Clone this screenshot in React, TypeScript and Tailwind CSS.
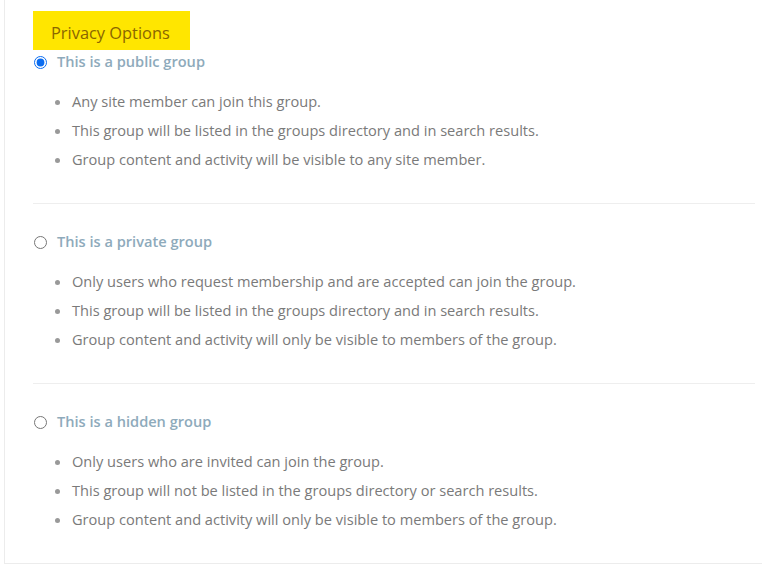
import * as React from "react";

type Option = {
    id: string;
    label: string;
    points: string[];
};

const options: Option[] = [
    {
        id: "public",
        label: "This is a public group",
        points: [
            "Any site member can join this group.",
            "This group will be listed in the groups directory and in search results.",
            "Group content and activity will be visible to any site member.",
        ],
    },
    {
        id: "private",
        label: "This is a private group",
        points: [
            "Only users who request membership and are accepted can join the group.",
            "This group will be listed in the groups directory and in search results.",
            "Group content and activity will only be visible to members of the group.",
        ],
    },
    {
        id: "hidden",
        label: "This is a hidden group",
        points: [
            "Only users who are invited can join the group.",
            "This group will not be listed in the groups directory or search results.",
            "Group content and activity will only be visible to members of the group.",
        ],
    },
];

export default function App() {
    const [status, setStatus] = React.useState("public");

    return (
        <div className="min-h-[583px] bg-white" style={{fontFamily: '"Open Sans", "Noto Sans", sans-serif'}}>
            <div className="ml-[4px] h-[564px] border-l border-b border-[#ececec] pl-[28px] pr-[7px] pt-[11px]">
                <div className="flex h-[39px] w-[157px] items-center bg-[#ffe600] pl-[18px] pt-[6px] text-[16.4px] text-[#8a6500]">
                    Privacy Options
                </div>

                {options.map((opt, i) => (
                    <div
                        key={opt.id}
                        className={i < options.length - 1 ? "border-b border-[#eeeeee] pb-[29px]" : "pb-[29px]"}
                    >
                        <label
                            className={
                                "flex h-[24px] cursor-pointer items-center gap-[10px] " +
                                (i === 0 ? "mt-0" : "mt-[26px]")
                            }
                        >
                            <input
                                type="radio"
                                name="group-status"
                                checked={status === opt.id}
                                onChange={() => setStatus(opt.id)}
                                className="m-0 ml-[1px] h-[13px] w-[13px] accent-[#0a6cf0]"
                            />
                            <span className="text-[14.6px] font-semibold text-[#8eaabb]">{opt.label}</span>
                        </label>
                        <ul className="mt-[13px] list-disc pl-[39px] text-[14.6px] leading-[29px] text-[#7a7a7a] marker:text-[#999]">
                            {opt.points.map((p) => (
                                <li key={p}>{p}</li>
                            ))}
                        </ul>
                    </div>
                ))}
            </div>
        </div>
    );
}
